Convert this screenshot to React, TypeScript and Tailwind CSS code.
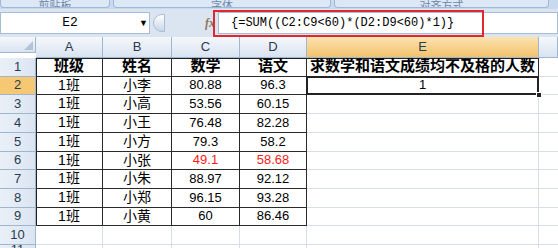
import React from 'react';

const data: string[][] = [
  ['班级', '姓名', '数学', '语文'],
  ['1班', '小李', '80.88', '96.3'],
  ['1班', '小高', '53.56', '60.15'],
  ['1班', '小王', '76.48', '82.28'],
  ['1班', '小方', '79.3', '58.2'],
  ['1班', '小张', '49.1', '58.68'],
  ['1班', '小朱', '88.97', '92.12'],
  ['1班', '小郑', '96.15', '93.28'],
  ['1班', '小黄', '60', '86.46'],
];

const heights = [19, 18, 19, 19, 19, 18, 19, 19, 18, 19, 12];
const cols = ['A', 'B', 'C', 'D', 'E', ''];

const cjk = { fontFamily: '"Liberation Sans", "Noto Sans CJK SC", sans-serif' };

function ColHeader({ label, active }: { label: string; active?: boolean }) {
  return (
    <div
      className={`flex items-center justify-center border-r border-b border-[#9eb6ce] text-[13px] text-[#2b3a4f] ${
        active ? 'bg-gradient-to-b from-[#fbe3b0] to-[#f3c26a]' : 'bg-gradient-to-b from-[#f5f8fc] to-[#d9e3f0]'
      }`}
    >
      {label}
    </div>
  );
}

function RowHeader({ n, h, active }: { n: number; h: number; active?: boolean }) {
  return (
    <div
      style={{ height: h }}
      className={`flex items-center justify-center border-r border-b border-[#9eb6ce] text-[13px] text-[#2b3a4f] ${
        active ? 'bg-[#f7c873]' : 'bg-gradient-to-r from-[#eaf0f8] to-[#dbe5f2]'
      }`}
    >
      {n}
    </div>
  );
}

export default function App() {
  return (
    <div className="w-[558px] h-[248px] overflow-hidden bg-[#dbe5f2] relative" style={cjk}>
      {/* ribbon groups, cut off */}
      <div className="h-[9px] flex gap-[3px] bg-[#c9d9ee] overflow-hidden">
        {[
          ['剪贴板', 110],
          ['字体', 218],
          ['对齐方式', 215],
        ].map(([t, w]) => (
          <div
            key={t as string}
            style={{ width: w as number }}
            className="h-[8px] rounded-b-[4px] border border-t-0 border-[#9fb8d8] bg-[#dde8f6] flex items-end justify-center overflow-hidden"
          >
            <span className="text-[11px] leading-none text-[#6d86a8] translate-y-[5px]">{t}</span>
          </div>
        ))}
      </div>

      {/* formula bar */}
      <div className="h-[28px] flex items-center bg-[#dbe5f2] relative">
        <div className="ml-0 h-[22px] w-[150px] bg-white border border-[#a7bcd6] flex items-center">
          <span className="flex-1 text-center text-[13px] text-black" style={{ fontFamily: '"Liberation Mono", monospace' }}>
            E2
          </span>
          <span className="w-[10px] text-[9px] text-black leading-none">▼</span>
        </div>
        <div className="ml-[3px] w-[12px] h-[18px] rounded-l-full border border-[#a7bcd6] bg-gradient-to-b from-white to-[#c9d6e6]" />
        <div className="flex-1" />
        <span className="text-[12px] italic font-bold text-[#8a7a55] mr-[3px]" style={{ fontFamily: '"Liberation Serif", serif' }}>
          fx
        </span>
        <div className="h-[22px] w-[340px] bg-white border border-[#a7bcd6] flex items-center pl-[12px]">
          <span className="text-[12px] text-black" style={{ fontFamily: '"Liberation Mono", monospace' }}>
            {'{=SUM((C2:C9<60)*(D2:D9<60)*1)}'}
          </span>
        </div>
        <div className="absolute left-[213px] top-[1px] w-[271px] h-[27px] border-2 border-[#e0282e]" />
      </div>

      {/* sheet */}
      <div className="grid grid-cols-[36px_67px_69px_68px_67px_232px_1fr] bg-white">
        <div className="h-[16px] border-r border-b border-[#9eb6ce] bg-gradient-to-b from-[#f5f8fc] to-[#d9e3f0] flex items-end justify-end pr-[2px] pb-[2px]">
          <svg width="9" height="9" viewBox="0 0 9 9">
            <polygon points="9,0 9,9 0,9" fill="#b4c4d8" />
          </svg>
        </div>
        {cols.map((c) => (
          <ColHeader key={c || 'f'} label={c} active={c === 'E'} />
        ))}

        {heights.map((h, r) => {
          const row = data[r];
          const n = r + 1;
          return (
            <React.Fragment key={n}>
              <RowHeader n={n} h={h} active={n === 2} />
              {[0, 1, 2, 3].map((ci) => {
                if (!row)
                  return <div key={ci} style={{ height: h }} className="border-r border-b border-[#d7dee9]" />;
                const txt = row[ci];
                const head = r === 0;
                const red = n === 6 && ci >= 2;
                const isNum = ci >= 2 && !head;
                const inset =
                  r === 0 && ci === 0
                    ? 'shadow-[inset_1px_1px_0_#222]'
                    : r === 0
                    ? 'shadow-[inset_0_1px_0_#222]'
                    : ci === 0
                    ? 'shadow-[inset_1px_0_0_#222]'
                    : '';
                return (
                  <div
                    key={ci}
                    style={{ height: h }}
                    className={`flex items-center justify-center border-r border-b border-[#2a2a2a] ${inset} ${
                      head ? 'font-bold text-[15px]' : isNum ? 'text-[13px]' : 'text-[14px]'
                    } ${red ? 'text-[#ff1a1a]' : 'text-black'}`}
                  >
                    {txt}
                  </div>
                );
              })}
              {n === 1 ? (
                <div
                  style={{ height: h }}
                  className="flex items-center justify-center border-r border-b border-[#2a2a2a] shadow-[inset_0_1px_0_#222] font-bold text-[15px] text-black whitespace-nowrap"
                >
                  求数学和语文成绩均不及格的人数
                </div>
              ) : n === 2 ? (
                <div style={{ height: h }} className="relative flex items-center justify-center border-r border-b border-[#2a2a2a] text-[13px] text-black">
                  1
                  <div className="absolute -left-px -top-px -right-px -bottom-px border-2 border-[#222]" />
                  <div className="absolute -right-[4px] -bottom-[4px] w-[6px] h-[6px] bg-[#222] border border-white" />
                </div>
              ) : (
                <div style={{ height: h }} className="border-r border-b border-[#d7dee9]" />
              )}
              <div style={{ height: h }} className="border-b border-[#d7dee9]" />
            </React.Fragment>
          );
        })}
      </div>
    </div>
  );
}
